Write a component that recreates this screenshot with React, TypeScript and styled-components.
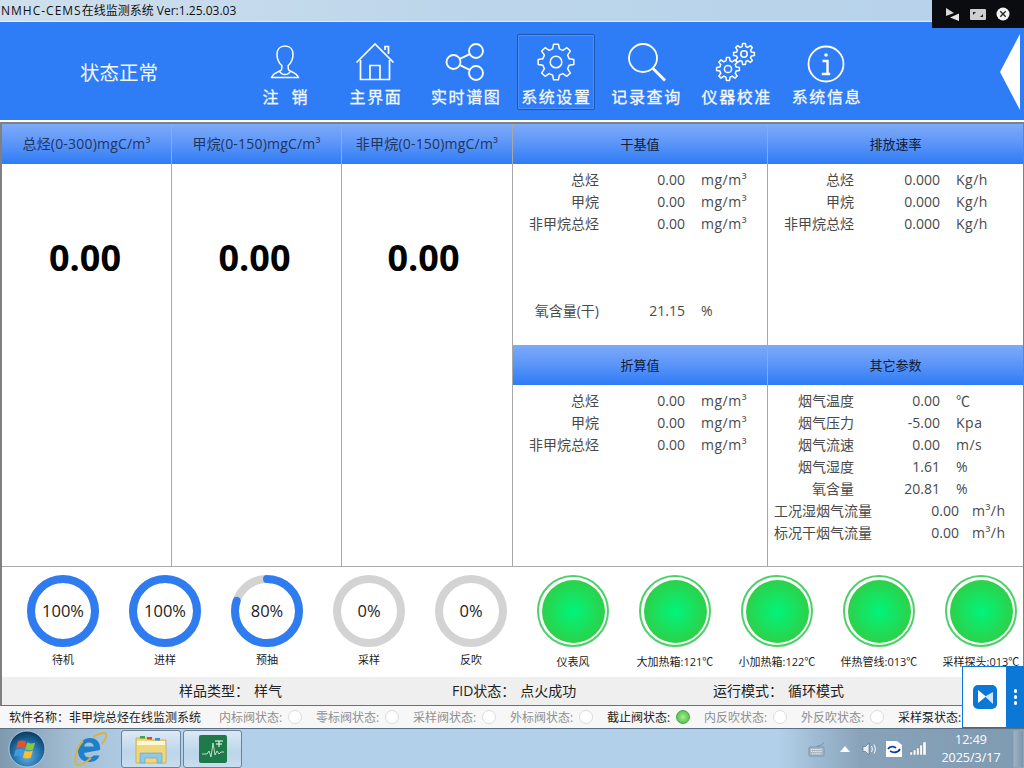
import React from 'react';
import styled, { createGlobalStyle } from 'styled-components';

const Global = createGlobalStyle`
  html, body { margin: 0; padding: 0; background: #fff; }
  * { box-sizing: border-box; }
`;

const FONT = `"Open Sans", "Noto Sans CJK SC", "Noto Sans", sans-serif`;

const Page = styled.div`
  position: relative;
  width: 1024px;
  height: 768px;
  overflow: hidden;
  display: flex;
  flex-direction: column;
  font-family: ${FONT};
  background: #fff;
`;

const TitleBar = styled.div`
  height: 22px;
  flex: none;
  padding-left: 1px;
  font-size: 12px;
  line-height: 21px;
  color: #111;
  white-space: nowrap;
  background: linear-gradient(90deg, #cfe0ee 0%, #bcd5ea 45%, #b6d2ea 100%);
  border-bottom: 1px solid #e8eef4;
`;

const ProductName = styled.span`
  letter-spacing: 1px;
`;

const NavBar = styled.div`
  height: 98px;
  flex: none;
  background: #2e7cf6;
  display: flex;
  align-items: center;
`;

const StatusText = styled.div`
  width: 246px;
  padding: 0 0 0 80px;
  font-size: 19.5px;
  color: #f2f6fd;
  white-space: nowrap;
`;

const NavList = styled.div`
  display: flex;
  gap: 12.2px;
  margin-top: 2px;
`;

const NavItem = styled.div<{ $active?: boolean }>`
  width: 78px;
  height: 76px;
  display: flex;
  flex-direction: column;
  align-items: center;
  justify-content: flex-end;
  border-radius: 2px;
  border: 1px solid ${(p) => (p.$active ? '#1c56b0' : 'transparent')};
  box-shadow: ${(p) => (p.$active ? 'inset 0 0 0 0.5px #6ea4f8' : 'none')};
`;

const NavIcon = styled.svg`
  width: 44px;
  height: 44px;
  fill: none;
  stroke: #fff;
  stroke-width: 1.5;
  margin-bottom: 1px;
`;

const NavLabel = styled.div`
  font-size: 16px;
  line-height: 24px;
  color: #f4f8ff;
  white-space: pre;
  letter-spacing: 1.6px;
  margin-right: -1.6px;
  -webkit-text-stroke: 0.3px #f4f8ff;
`;

const Collapse = styled.svg`
  width: 20px;
  height: 76px;
  margin-left: auto;
  margin-right: 4px;
  margin-top: 2px;
  fill: #fff;
`;

const Frame = styled.div`
  margin-top: 2px;
  height: 584px;
  flex: none;
  border-top: 2px solid #808080;
  border-left: 2px solid #808080;
  border-right: 1px solid #808080;
  border-bottom: 1px solid #707070;
  display: flex;
  flex-direction: column;
`;

const Main = styled.div`
  height: 443px;
  flex: none;
  display: grid;
  grid-template-columns: 170px 170px 171px 255px 1fr;
  border-bottom: 1px solid #aaa;
`;

const Column = styled.div<{ $last?: boolean }>`
  display: flex;
  flex-direction: column;
  border-right: ${(p) => (p.$last ? 'none' : '1px solid #a8a8a8')};
  min-width: 0;
`;

const Head = styled.div<{ $dark?: boolean }>`
  height: 40px;
  flex: none;
  display: flex;
  align-items: center;
  justify-content: center;
  padding-bottom: 2px;
  font-size: ${(p) => (p.$dark ? 13 : 14)}px;
  letter-spacing: ${(p) => (p.$dark ? 0 : 0.2)}px;
  color: ${(p) => (p.$dark ? '#0e1c38' : '#1e3560')};
  white-space: nowrap;
  background: linear-gradient(180deg, #7daafa 0%, #5f97f8 45%, #2e7cf6 100%);
`;

const BigValue = styled.div<{ $shift: number }>`
  font-size: 36px;
  font-weight: 700;
  color: #000;
  text-align: center;
  margin-top: 69px;
  padding-right: ${(p) => p.$shift}px;
  line-height: 50px;
`;

const RightGrid = styled.div`
  grid-column: 4 / 6;
  display: grid;
  grid-template-columns: 255px 1fr;
  grid-template-rows: 221px 1fr;
`;

const Body = styled.div`
  padding-top: 5px;
`;

const Row = styled.div<{ $offset?: number; $label?: number; $value?: number }>`
  display: grid;
  grid-template-columns: ${(p) => p.$label ?? 86}px ${(p) => p.$value ?? 86}px 1fr;
  height: 22px;
  line-height: 22px;
  font-size: 14px;
  color: #4a4a4a;
  margin-top: ${(p) => p.$offset ?? 0}px;
  white-space: nowrap;
`;

const Label = styled.span`
  text-align: right;
`;

const Value = styled.span`
  text-align: right;
`;

const Unit = styled.span<{ $gap?: number }>`
  padding-left: ${(p) => p.$gap ?? 16}px;
  letter-spacing: 0.5px;
`;

const Gauges = styled.div`
  height: 110px;
  flex: none;
  padding-left: 10px;
  display: flex;
  overflow: hidden;
`;

const GaugeCell = styled.div`
  width: 102px;
  flex: none;
  display: flex;
  flex-direction: column;
  align-items: center;
  padding-top: 8px;
`;

const Dial = styled.div`
  position: relative;
  width: 72px;
  height: 72px;
`;

const DialSvg = styled.svg`
  display: block;
  width: 72px;
  height: 72px;
  transform: rotate(-90deg);
`;

const DialText = styled.div`
  position: absolute;
  inset: 0 0 2px 0;
  display: flex;
  align-items: center;
  justify-content: center;
  font-size: 16.5px;
  color: #222;
`;

const CellLabel = styled.div<{ $low?: boolean }>`
  margin-top: ${(p) => (p.$low ? 6 : 4)}px;
  font-size: 11px;
  line-height: 18px;
  color: #222;
  white-space: nowrap;
`;

const Lamp = styled.div`
  width: 72px;
  height: 72px;
  border-radius: 50%;
  border: 2px solid #4fcf6a;
  padding: 2.5px;
  background: #fff;
`;

const LampCore = styled.div`
  width: 100%;
  height: 100%;
  border-radius: 50%;
  background: radial-gradient(circle closest-side, #00f47c 0%, #14e564 45%, #2dd14a 100%);
`;

const InfoBar = styled.div`
  height: 28px;
  flex: none;
  background: #efefef;
  padding: 0 0 2px 177px;
  display: grid;
  grid-template-columns: 273px 261px 1fr;
  align-items: center;
  font-size: 14px;
  color: #222;
  white-space: nowrap;
`;

const InfoValue = styled.span`
  margin-left: 5px;
`;

const StatusBar = styled.div`
  height: 22px;
  flex: none;
  display: flex;
  align-items: center;
  padding-left: 9px;
  font-size: 12px;
  color: #1c1c1c;
  white-space: nowrap;
  background: #f7f7f7;
`;

const Software = styled.div`
  width: 210px;
  flex: none;
`;

const Valve = styled.div<{ $on?: boolean }>`
  width: 97px;
  flex: none;
  display: flex;
  align-items: center;
  gap: 6px;
  color: ${(p) => (p.$on ? '#1c1c1c' : '#8f8f8f')};
`;

const Led = styled.span<{ $on?: boolean }>`
  width: 14px;
  height: 14px;
  border-radius: 50%;
  flex: none;
  border: 1px solid ${(p) => (p.$on ? '#4aa34a' : '#dcdcdc')};
  background: ${(p) => (p.$on ? 'radial-gradient(circle, #a6ec8f 0%, #52c24a 80%)' : '#fff')};
`;

const Taskbar = styled.div`
  height: 40px;
  flex: none;
  border-top: 1px solid #5a6f84;
  background: linear-gradient(90deg, #7f99ae 0%, #a3bdd2 7%, #b3d0ea 14%, #b3d0ea 76%, #88a3b9 84%, #7f9bb1 100%);
  display: flex;
  align-items: center;
  color: #fff;
`;

const Orb = styled.svg`
  width: 38px;
  height: 38px;
  margin-left: 8px;
  flex: none;
`;

const IeIcon = styled.svg`
  width: 34px;
  height: 36px;
  margin-left: 27px;
  flex: none;
`;

const TaskButton = styled.div`
  width: 59px;
  height: 38px;
  flex: none;
  border: 1px solid #6d8296;
  border-radius: 3px;
  background: linear-gradient(180deg, #dbe9f5 0%, #bcd5ea 60%, #c9deef 100%);
  display: flex;
  align-items: center;
  justify-content: center;
`;

const FirstButton = styled(TaskButton)`
  width: 60px;
  margin-left: 14px;
  margin-right: 2px;
`;

const TaskIcon = styled.svg`
  width: 34px;
  height: 32px;
`;

const Tray = styled.div`
  margin-left: auto;
  display: flex;
  align-items: center;
`;

const TraySvg = styled.svg<{ $gap: number }>`
  margin-left: ${(p) => p.$gap}px;
  flex: none;
`;

const Clock = styled.div`
  width: 72px;
  margin-left: 9px;
  text-align: center;
  font-size: 12.5px;
  line-height: 18px;
  color: #fff;
`;

const TrayEdge = styled.div`
  width: 11px;
  height: 38px;
  margin-left: 6px;
  border: 1px solid #8fa4b6;
  background: linear-gradient(90deg, #9db2c4, #7d95a9);
`;

const RemoteBar = styled.div`
  position: absolute;
  top: 0;
  right: 0;
  width: 92px;
  height: 28px;
  background: #0a0c10;
  display: flex;
  align-items: center;
  gap: 10px;
  padding: 0 0 0 14px;
`;

const SideWidget = styled.div`
  position: absolute;
  right: 0;
  top: 666px;
  width: 62px;
  height: 62px;
  display: flex;
  background: #0b78d8;
`;

const WidgetMain = styled.div`
  width: 45px;
  background: #fff;
  border: 1px solid #0b78d8;
  display: flex;
  align-items: center;
  justify-content: center;
`;

const WidgetDots = styled.div`
  flex: 1;
  display: flex;
  flex-direction: column;
  align-items: center;
  justify-content: center;
  gap: 2.5px;
`;

const Dot = styled.span`
  width: 3.5px;
  height: 3.5px;
  border-radius: 50%;
  background: #fff;
`;

function gearPath(cx: number, cy: number, ro: number, ri: number, teeth: number) {
  const pts: string[] = [];
  const step = (Math.PI * 2) / teeth;
  for (let i = 0; i < teeth; i++) {
    const a = i * step - Math.PI / 2;
    const seq: [number, number][] = [
      [ri, a - step * 0.32],
      [ro, a - step * 0.17],
      [ro, a + step * 0.17],
      [ri, a + step * 0.32],
    ];
    seq.forEach(([r, t]) => pts.push(`${(cx + r * Math.cos(t)).toFixed(2)} ${(cy + r * Math.sin(t)).toFixed(2)}`));
  }
  return `M${pts.join('L')}Z`;
}

const icons: Record<string, React.ReactNode> = {
  user: (
    <>
      <path d="M22 6c-5.400 0-8 3.800-8 8.200 0 2.400.4 4.300 1.100 6 .9 2.300 2.300 4.300 3.700 5.300v3.200c0 1-.9 1.800-2.500 2.500-3.100 1.300-6.500 2.500-7.700 6.300h26.800c-1.200-3.800-4.600-5-7.700-6.300-1.600-.7-2.500-1.500-2.500-2.500v-3.200c1.400-1 2.800-3 3.700-5.300.7-1.700 1.100-3.600 1.100-6C30 9.800 27.400 6 22 6z" />
      <path d="M16.300 31c1.200 2.200 3.300 3.500 5.700 3.500s4.500-1.300 5.700-3.500" />
    </>
  ),
  home: (
    <>
      <path d="M3.500 22.500 22 4l18.500 18.500" strokeWidth="1.7" />
      <path d="M7.500 20v19.500h29V20" strokeWidth="1.7" />
      <path d="M17 39.500V25.500h10v14" strokeWidth="1.7" />
      <path d="M32 10V6.500h3.500V14" strokeWidth="1.7" />
    </>
  ),
  share: (
    <>
      <circle cx="33" cy="11" r="7" strokeWidth="1.8" />
      <circle cx="33" cy="33" r="7" strokeWidth="1.8" />
      <circle cx="10.500" cy="22" r="7" strokeWidth="1.8" />
      <path d="M26.700 14.100 16.800 18.900M26.700 29.900 16.800 25.100" strokeWidth="1.8" />
    </>
  ),
  gear: (
    <>
      <path d={gearPath(22, 22, 18, 13.500, 8)} strokeLinejoin="round" />
      <circle cx="22" cy="22" r="5.800" />
    </>
  ),
  search: (
    <>
      <circle cx="19" cy="18" r="14" strokeWidth="1.800" />
      <path d="M29 28.500l12 12" strokeWidth="2.800" />
    </>
  ),
  gears: (
    <>
      <path d={gearPath(30, 14, 10.500, 7.600, 8)} strokeLinejoin="round" />
      <circle cx="30" cy="14" r="3.200" />
      <path d={gearPath(14, 29, 11.500, 8.400, 8)} strokeLinejoin="round" />
      <circle cx="14" cy="29" r="3.600" />
    </>
  ),
  info: (
    <>
      <circle cx="22" cy="24" r="17.500" strokeWidth="1.800" />
      <circle cx="22" cy="15" r="1.800" fill="#fff" stroke="none" />
      <path d="M18.500 21h5v12.500M17.800 34h8.400" strokeWidth="2.400" />
    </>
  ),
};

const navItems = [
  { icon: 'user', label: '注  销' },
  { icon: 'home', label: '主界面' },
  { icon: 'share', label: '实时谱图' },
  { icon: 'gear', label: '系统设置', active: true },
  { icon: 'search', label: '记录查询' },
  { icon: 'gears', label: '仪器校准' },
  { icon: 'info', label: '系统信息' },
];

const columns = [
  { title: '总烃(0-300)mgC/m³', shift: 3 },
  { title: '甲烷(0-150)mgC/m³', shift: 4 },
  { title: '非甲烷(0-150)mgC/m³', shift: 7 },
];

const dryRows = [
  ['总烃', '0.00', 'mg/m³'],
  ['甲烷', '0.00', 'mg/m³'],
  ['非甲烷总烃', '0.00', 'mg/m³'],
];
const rateRows = [
  ['总烃', '0.000', 'Kg/h'],
  ['甲烷', '0.000', 'Kg/h'],
  ['非甲烷总烃', '0.000', 'Kg/h'],
];
const otherRows = [
  ['烟气温度', '0.00', '℃'],
  ['烟气压力', '-5.00', 'Kpa'],
  ['烟气流速', '0.00', 'm/s'],
  ['烟气湿度', '1.61', '%'],
  ['氧含量', '20.81', '%'],
];
const flowRows = [
  ['工况湿烟气流量', '0.00', 'm³/h'],
  ['标况干烟气流量', '0.00', 'm³/h'],
];

const dials = [
  { pct: 100, label: '待机' },
  { pct: 100, label: '进样' },
  { pct: 80, label: '预抽' },
  { pct: 0, label: '采样' },
  { pct: 0, label: '反吹' },
];
const lamps = ['仪表风', '大加热箱:121℃', '小加热箱:122℃', '伴热管线:013℃', '采样探头:013℃'];
const valves = [
  { label: '内标阀状态:' },
  { label: '零标阀状态:' },
  { label: '采样阀状态:' },
  { label: '外标阀状态:' },
  { label: '截止阀状态:', on: true },
  { label: '内反吹状态:' },
  { label: '外反吹状态:' },
  { label: '采样泵状态:', on: true },
];

function DialGauge({ pct, label }: { pct: number; label: string }) {
  const r = 32;
  const c = 2 * Math.PI * r;
  const partial = pct > 0 && pct < 100;
  return (
    <GaugeCell>
      <Dial>
        <DialSvg viewBox="0 0 72 72">
          <circle cx="36" cy="36" r={r} fill="none" stroke="#d3d3d3" strokeWidth="8" />
          {pct > 0 && (
            <circle
              cx="36"
              cy="36"
              r={r}
              fill="none"
              stroke="#2e7cf0"
              strokeWidth="8"
              strokeLinecap={partial ? 'round' : 'butt'}
              strokeDasharray={`${(c * pct) / 100} ${c}`}
            />
          )}
        </DialSvg>
        <DialText>{pct}%</DialText>
      </Dial>
      <CellLabel>{label}</CellLabel>
    </GaugeCell>
  );
}

export default function App() {
  return (
    <Page>
      <Global />
      <TitleBar>
        <ProductName>NMHC-CEMS</ProductName>在线监测系统 Ver:1.25.03.03
      </TitleBar>
      <NavBar>
        <StatusText>状态正常</StatusText>
        <NavList>
          {navItems.map((n) => (
            <NavItem key={n.icon} $active={n.active}>
              <NavIcon viewBox="0 0 44 44">{icons[n.icon]}</NavIcon>
              <NavLabel>{n.label}</NavLabel>
            </NavItem>
          ))}
        </NavList>
        <Collapse viewBox="0 0 20 76">
          <path d="M0 38 20 0v76z" />
        </Collapse>
      </NavBar>
      <Frame>
        <Main>
          {columns.map((c) => (
            <Column key={c.title}>
              <Head>{c.title}</Head>
              <BigValue $shift={c.shift}>0.00</BigValue>
            </Column>
          ))}
          <RightGrid>
            <Column>
              <Head $dark>干基值</Head>
              <Body>
                {dryRows.map((r) => (
                  <Row key={r[0]}>
                    <Label>{r[0]}</Label>
                    <Value>{r[1]}</Value>
                    <Unit>{r[2]}</Unit>
                  </Row>
                ))}
                <Row $offset={65}>
                  <Label>氧含量(干)</Label>
                  <Value>21.15</Value>
                  <Unit>%</Unit>
                </Row>
              </Body>
            </Column>
            <Column $last>
              <Head $dark>排放速率</Head>
              <Body>
                {rateRows.map((r) => (
                  <Row key={r[0]}>
                    <Label>{r[0]}</Label>
                    <Value>{r[1]}</Value>
                    <Unit>{r[2]}</Unit>
                  </Row>
                ))}
              </Body>
            </Column>
            <Column>
              <Head $dark>折算值</Head>
              <Body>
                {dryRows.map((r) => (
                  <Row key={r[0]}>
                    <Label>{r[0]}</Label>
                    <Value>{r[1]}</Value>
                    <Unit>{r[2]}</Unit>
                  </Row>
                ))}
              </Body>
            </Column>
            <Column $last>
              <Head $dark>其它参数</Head>
              <Body>
                {otherRows.map((r) => (
                  <Row key={r[0]}>
                    <Label>{r[0]}</Label>
                    <Value>{r[1]}</Value>
                    <Unit>{r[2]}</Unit>
                  </Row>
                ))}
                {flowRows.map((r) => (
                  <Row key={r[0]} $label={104} $value={87}>
                    <Label>{r[0]}</Label>
                    <Value>{r[1]}</Value>
                    <Unit $gap={13}>{r[2]}</Unit>
                  </Row>
                ))}
              </Body>
            </Column>
          </RightGrid>
        </Main>
        <Gauges>
          {dials.map((d) => (
            <DialGauge key={d.label} pct={d.pct} label={d.label} />
          ))}
          {lamps.map((l) => (
            <GaugeCell key={l}>
              <Lamp>
                <LampCore />
              </Lamp>
              <CellLabel $low>{l}</CellLabel>
            </GaugeCell>
          ))}
        </Gauges>
        <InfoBar>
          <span>
            样品类型：<InfoValue>样气</InfoValue>
          </span>
          <span>
            FID状态：<InfoValue>点火成功</InfoValue>
          </span>
          <span>
            运行模式：<InfoValue>循环模式</InfoValue>
          </span>
        </InfoBar>
      </Frame>
      <StatusBar>
        <Software>软件名称：非甲烷总烃在线监测系统</Software>
        {valves.map((v) => (
          <Valve key={v.label} $on={v.on}>
            {v.label}
            <Led $on={v.on} />
          </Valve>
        ))}
      </StatusBar>
      <Taskbar>
        <Orb viewBox="0 0 38 38">
          <defs>
            <radialGradient id="orb" cx="50%" cy="70%" r="65%">
              <stop offset="0%" stopColor="#5fb0e8" />
              <stop offset="60%" stopColor="#1f6fa8" />
              <stop offset="100%" stopColor="#0e3f68" />
            </radialGradient>
          </defs>
          <circle cx="19" cy="19" r="18" fill="url(#orb)" stroke="#c8d8e4" strokeWidth="0.8" />
          <path d="M10 11.500c3-1.500 5.500-1.300 8 .2l-2 7c-2.500-1.500-5-1.600-8-.2z" fill="#e8522a" />
          <path d="M19.200 12.200c2.700 1.500 5.200 1.600 8 .2l-2 7c-2.800 1.300-5.300 1.200-8-.2z" fill="#8cc63f" />
          <path d="M7.700 19.700c3-1.400 5.500-1.300 8 .2l-2 7c-2.500-1.500-5-1.600-8-.2z" fill="#3f9be0" />
          <path d="M16.900 20.400c2.700 1.500 5.200 1.600 8 .2l-2 7c-2.800 1.300-5.300 1.200-8-.2z" fill="#fbc02d" />
        </Orb>
        <IeIcon viewBox="0 0 34 36">
          <path d="M27 19c1-8-4-12-10-12C10 7 5 13 5 20c0 7 5 11 11 11 5 0 9-2 10.500-6.500h-6c-1 1.500-2.500 2-4.500 2-2.800 0-4.800-1.800-5-4.500zM11 15.500C11.500 12.800 13.500 11.500 16 11.500s4.400 1.300 4.800 4z" fill="#1f7fc9" fillRule="evenodd" />
          <path d="M10 10C3 17 1 29 3 33c2 3 9-1 15-6M20 6c5-3 11-5 13-3 1 2-1 6-4 10" fill="none" stroke="#dcb13c" strokeWidth="1.800" />
        </IeIcon>
        <FirstButton>
          <TaskIcon viewBox="0 0 34 32">
            <path d="M2 5h13l2 2h15v23H2z" fill="#f0d77e" stroke="#c9a84a" strokeWidth="0.8" />
            <path d="M3 8h28v4H3z" fill="#fff8d8" />
            <rect x="6" y="3" width="5" height="2.500" fill="#3aa655" />
            <rect x="13" y="4" width="5" height="2.500" fill="#d9483b" />
            <rect x="21" y="5" width="5" height="2.500" fill="#3b8fd9" />
            <path d="M6 30V20h22v10h-5v-5H11v5z" fill="#8cc8ea" stroke="#5f9fc6" strokeWidth="0.6" />
          </TaskIcon>
        </FirstButton>
        <TaskButton>
          <TaskIcon viewBox="0 0 34 32">
            <rect x="3" y="2" width="28" height="28" rx="2" fill="#1f7a4a" />
            <path d="M6 21h5l2-3 2 6 2-14 2 12 2-4 2 3 2-2h3" fill="none" stroke="#e4f2ea" strokeWidth="0.8" />
            <path d="M19 8h8M23 8v6M20 11h6" fill="none" stroke="#fff" strokeWidth="1" />
          </TaskIcon>
        </TaskButton>
        <Tray>
          <TraySvg $gap={0} width="18" height="16" viewBox="0 0 18 16">
            <rect x="1" y="6" width="15" height="9" rx="1" fill="#aab9c6" stroke="#6f8192" strokeWidth="0.7" />
            <path d="M3 8.500h11M3 10.500h11M4 12.800h9" stroke="#e6ecf1" strokeWidth="1" strokeDasharray="1.300 .8" />
            <path d="M9 6c0-2 2-1 4-2s2-2 3-2" fill="none" stroke="#6f8192" strokeWidth="0.8" />
          </TraySvg>
          <TraySvg $gap={14} width="10" height="6" viewBox="0 0 10 6">
            <path d="M5 0l5 6H0z" fill="#fff" />
          </TraySvg>
          <TraySvg $gap={12} width="16" height="16" viewBox="0 0 16 16">
            <path d="M1 5.500h2.500L7 2v12l-3.500-3.500H1z" fill="#e9eef3" stroke="#5d7386" strokeWidth="0.7" />
            <path d="M9.500 5c1 1.800 1 4.200 0 6M12 3.500c1.700 2.700 1.700 6.300 0 9" fill="none" stroke="#fff" strokeWidth="1" />
          </TraySvg>
          <TraySvg $gap={8} width="16" height="16" viewBox="0 0 16 16">
            <path d="M0 0h11l5 4v12H0z" fill="#fff" />
            <path d="M2 8c2-3 6-3 8-1M14 8c-2 4-7 4-10 2" fill="none" stroke="#0a3ea8" strokeWidth="1.800" />
          </TraySvg>
          <TraySvg $gap={8} width="16" height="13" viewBox="0 0 16 13">
            <path d="M0 10h2.500v3H0zM3.300 8h2.500v5H3.300zM6.600 6h2.500v7H6.600zM9.900 3h2.500v10H9.900zM13 0h3v13h-3z" fill="#fff" stroke="#4f6578" strokeWidth="0.3" />
          </TraySvg>
          <Clock>
            12:49
            <br />
            2025/3/17
          </Clock>
          <TrayEdge />
        </Tray>
      </Taskbar>
      <RemoteBar>
        <svg width="14" height="14" viewBox="0 0 14 14">
          <path d="M0 1v8l8-3z" fill="#d8d8d8" />
          <path d="M13 6.500V14L4 10.500z" fill="#e8e8e8" />
        </svg>
        <svg width="16" height="11" viewBox="0 0 16 11">
          <rect width="16" height="11" rx="1" fill="#cfcfcf" />
          <path d="M3 3h3L3 6zM13 8h-3l3-3z" fill="#222" />
        </svg>
        <svg width="14" height="14" viewBox="0 0 14 14">
          <circle cx="7" cy="7" r="6.500" fill="#f2f2f2" />
          <path d="M4.300 4.300l5.400 5.400M9.700 4.300 4.300 9.700" stroke="#222" strokeWidth="1.300" />
        </svg>
      </RemoteBar>
      <SideWidget>
        <WidgetMain>
          <svg width="24" height="24" viewBox="0 0 24 24">
            <rect width="24" height="24" rx="5" fill="#0b78d8" />
            <path d="M5 5l8 6.500L5 18z" fill="#fff" />
            <path d="M20 7v12l-8-7.500z" fill="#cfe6f8" />
          </svg>
        </WidgetMain>
        <WidgetDots>
          <Dot />
          <Dot />
          <Dot />
        </WidgetDots>
      </SideWidget>
    </Page>
  );
}
